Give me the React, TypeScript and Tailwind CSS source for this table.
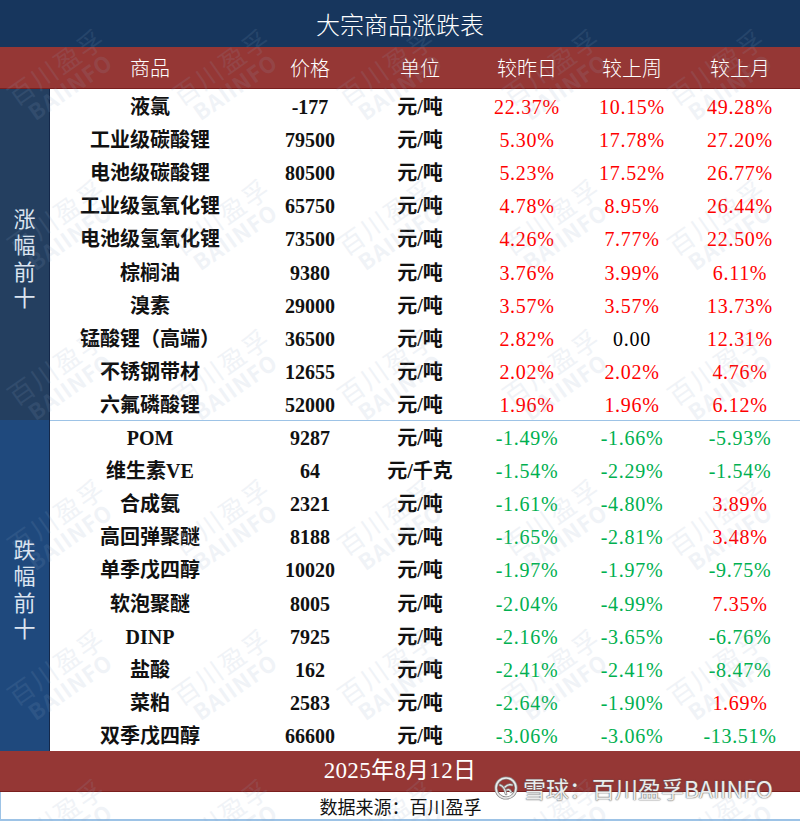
import React from "react";

type Row = { n: string; p: string; u: string; a: string; b: string; c: string };

const top: Row[] = [
  { n: "液氯", p: "-177", u: "元/吨", a: "22.37%", b: "10.15%", c: "49.28%" },
  { n: "工业级碳酸锂", p: "79500", u: "元/吨", a: "5.30%", b: "17.78%", c: "27.20%" },
  { n: "电池级碳酸锂", p: "80500", u: "元/吨", a: "5.23%", b: "17.52%", c: "26.77%" },
  { n: "工业级氢氧化锂", p: "65750", u: "元/吨", a: "4.78%", b: "8.95%", c: "26.44%" },
  { n: "电池级氢氧化锂", p: "73500", u: "元/吨", a: "4.26%", b: "7.77%", c: "22.50%" },
  { n: "棕榈油", p: "9380", u: "元/吨", a: "3.76%", b: "3.99%", c: "6.11%" },
  { n: "溴素", p: "29000", u: "元/吨", a: "3.57%", b: "3.57%", c: "13.73%" },
  { n: "锰酸锂（高端）", p: "36500", u: "元/吨", a: "2.82%", b: "0.00", c: "12.31%" },
  { n: "不锈钢带材", p: "12655", u: "元/吨", a: "2.02%", b: "2.02%", c: "4.76%" },
  { n: "六氟磷酸锂", p: "52000", u: "元/吨", a: "1.96%", b: "1.96%", c: "6.12%" },
];

const bottom: Row[] = [
  { n: "POM", p: "9287", u: "元/吨", a: "-1.49%", b: "-1.66%", c: "-5.93%" },
  { n: "维生素VE", p: "64", u: "元/千克", a: "-1.54%", b: "-2.29%", c: "-1.54%" },
  { n: "合成氨", p: "2321", u: "元/吨", a: "-1.61%", b: "-4.80%", c: "3.89%" },
  { n: "高回弹聚醚", p: "8188", u: "元/吨", a: "-1.65%", b: "-2.81%", c: "3.48%" },
  { n: "单季戊四醇", p: "10020", u: "元/吨", a: "-1.97%", b: "-1.97%", c: "-9.75%" },
  { n: "软泡聚醚", p: "8005", u: "元/吨", a: "-2.04%", b: "-4.99%", c: "7.35%" },
  { n: "DINP", p: "7925", u: "元/吨", a: "-2.16%", b: "-3.65%", c: "-6.76%" },
  { n: "盐酸", p: "162", u: "元/吨", a: "-2.41%", b: "-2.41%", c: "-8.47%" },
  { n: "菜粕", p: "2583", u: "元/吨", a: "-2.64%", b: "-1.90%", c: "1.69%" },
  { n: "双季戊四醇", p: "66600", u: "元/吨", a: "-3.06%", b: "-3.06%", c: "-13.51%" },
];

function pctClass(v: string) {
  if (v.startsWith("-")) return "text-[#00b050]";
  if (v === "0.00") return "text-black";
  return "text-[#ff0000]";
}

const cols = "grid grid-cols-[200px_120px_100px_114px_96px_120px]";

function DataRow({ r }: { r: Row }) {
  return (
    <div className={`${cols} h-[33.1px] items-center pt-[3px] text-[20px] leading-none`}>
      <div className="text-center font-bold text-[#111]">{r.n}</div>
      <div className="text-center font-bold text-[#111]">{r.p}</div>
      <div className="text-center font-bold text-[#111]">{r.u}</div>
      <div className={`text-center tracking-[0.7px] ${pctClass(r.a)}`}>{r.a}</div>
      <div className={`text-center tracking-[0.7px] ${pctClass(r.b)}`}>{r.b}</div>
      <div className={`text-center tracking-[0.7px] ${pctClass(r.c)}`}>{r.c}</div>
    </div>
  );
}

function Section({ label, rows, bg }: { label: string; rows: Row[]; bg: string }) {
  return (
    <div className="flex h-[331px]">
      <div
        className={`w-[50px] shrink-0 ${bg} border-r border-[#14284a] flex flex-col items-center justify-center pt-[4px] text-[22px] leading-none gap-[4.5px] text-[#dbe4f0]`}
        style={{ fontFamily: "'Noto Sans CJK SC', sans-serif" }}
      >
        {label.split("").map((c, i) => (
          <span key={i} className="block h-[22px]">
            {c}
          </span>
        ))}
      </div>
      <div className="flex-1 flex flex-col bg-white">
        {rows.map((r, i) => (
          <DataRow key={i} r={r} />
        ))}
      </div>
    </div>
  );
}

function Watermarks() {
  const cells = Array.from({ length: 30 });
  return (
    <div className="absolute inset-0 pointer-events-none overflow-hidden">
      <div className="grid grid-cols-[repeat(5,165px)] auto-rows-[150px] ml-[-20px]">
        {cells.map((_, i) => (
          <div key={i} className="flex items-center justify-center">
            <div
              className="-rotate-[35deg] flex flex-col items-center text-[#8fa7c4] opacity-[0.13] leading-none"
              style={{ fontFamily: "'Noto Sans CJK SC', sans-serif" }}
            >
              <span className="text-[26px] tracking-[2px]">百川盈孚</span>
              <span className="text-[22px] font-bold tracking-[1px]">BAIINFO</span>
            </div>
          </div>
        ))}
      </div>
    </div>
  );
}

export default function App() {
  return (
    <div
      className="relative w-[800px] h-[821px] overflow-hidden bg-white"
      style={{ fontFamily: "'Liberation Serif', 'Noto Sans CJK SC', serif" }}
    >
      <div className="h-[47px] bg-[#17365d] flex items-center justify-center text-white text-[24px]">
        <span style={{ fontFamily: "'Noto Sans CJK SC', sans-serif" }} className="font-light">
          大宗商品涨跌表
        </span>
      </div>
      <div className="h-[42px] bg-[#953735] border-b border-[#7a1f1e] flex">
        <div className="w-[50px] shrink-0" />
        <div
          className={`${cols} flex-1 items-center text-white text-[20px]`}
          style={{ fontFamily: "'Noto Sans CJK SC', sans-serif" }}
        >
          <div className="text-center font-light">商品</div>
          <div className="text-center font-light">价格</div>
          <div className="text-center font-light">单位</div>
          <div className="text-center font-light">较昨日</div>
          <div className="text-center font-light">较上周</div>
          <div className="text-center font-light">较上月</div>
        </div>
      </div>
      <Section label="涨幅前十" rows={top} bg="bg-[#243f60]" />
      <div className="relative">
        <div className="absolute left-[50px] right-0 top-0 h-px bg-[#9dc3e6] z-10" />
        <Section label="跌幅前十" rows={bottom} bg="bg-[#1f497d]" />
      </div>
      <div className="h-[41px] bg-[#953735] border-b border-[#7a1f1e] flex items-center justify-center text-white text-[23px]">
        <span className="tracking-[0.3px]">2025年8月12日</span>
      </div>
      <div className="h-[29px] border-b-2 border-l border-[#9dc3e6] flex items-center justify-center text-[18px] leading-none text-[#111]">
        <span style={{ fontFamily: "'Noto Sans CJK SC', sans-serif" }}>数据来源：百川盈孚</span>
      </div>
      <Watermarks />
      <div
        className="absolute left-[494px] top-[776px] flex items-center gap-[3px] text-[23px] text-[#ececec] leading-none [text-shadow:0_0_1.5px_#555,0_0_1px_#777]"
        style={{ fontFamily: "'Noto Sans CJK SC', sans-serif" }}
      >
        <svg width="24" height="24" viewBox="0 0 24 24" className="mr-[2px]">
          <circle cx="12" cy="12" r="10" fill="none" stroke="#888" strokeWidth="3.2" />
          <circle cx="12" cy="12" r="10" fill="none" stroke="#ececec" strokeWidth="1.6" />
          <path d="M6 9 C9 10 11 13 12 18 M11 11 C13 9 15 8 18 9 M13 14 C15 13 16 14 17 16" fill="none" stroke="#888" strokeWidth="2.6" strokeLinecap="round" />
          <path d="M6 9 C9 10 11 13 12 18 M11 11 C13 9 15 8 18 9 M13 14 C15 13 16 14 17 16" fill="none" stroke="#ececec" strokeWidth="1.2" strokeLinecap="round" />
        </svg>
        <span>雪球：百川盈孚BAIINFO</span>
      </div>
    </div>
  );
}
